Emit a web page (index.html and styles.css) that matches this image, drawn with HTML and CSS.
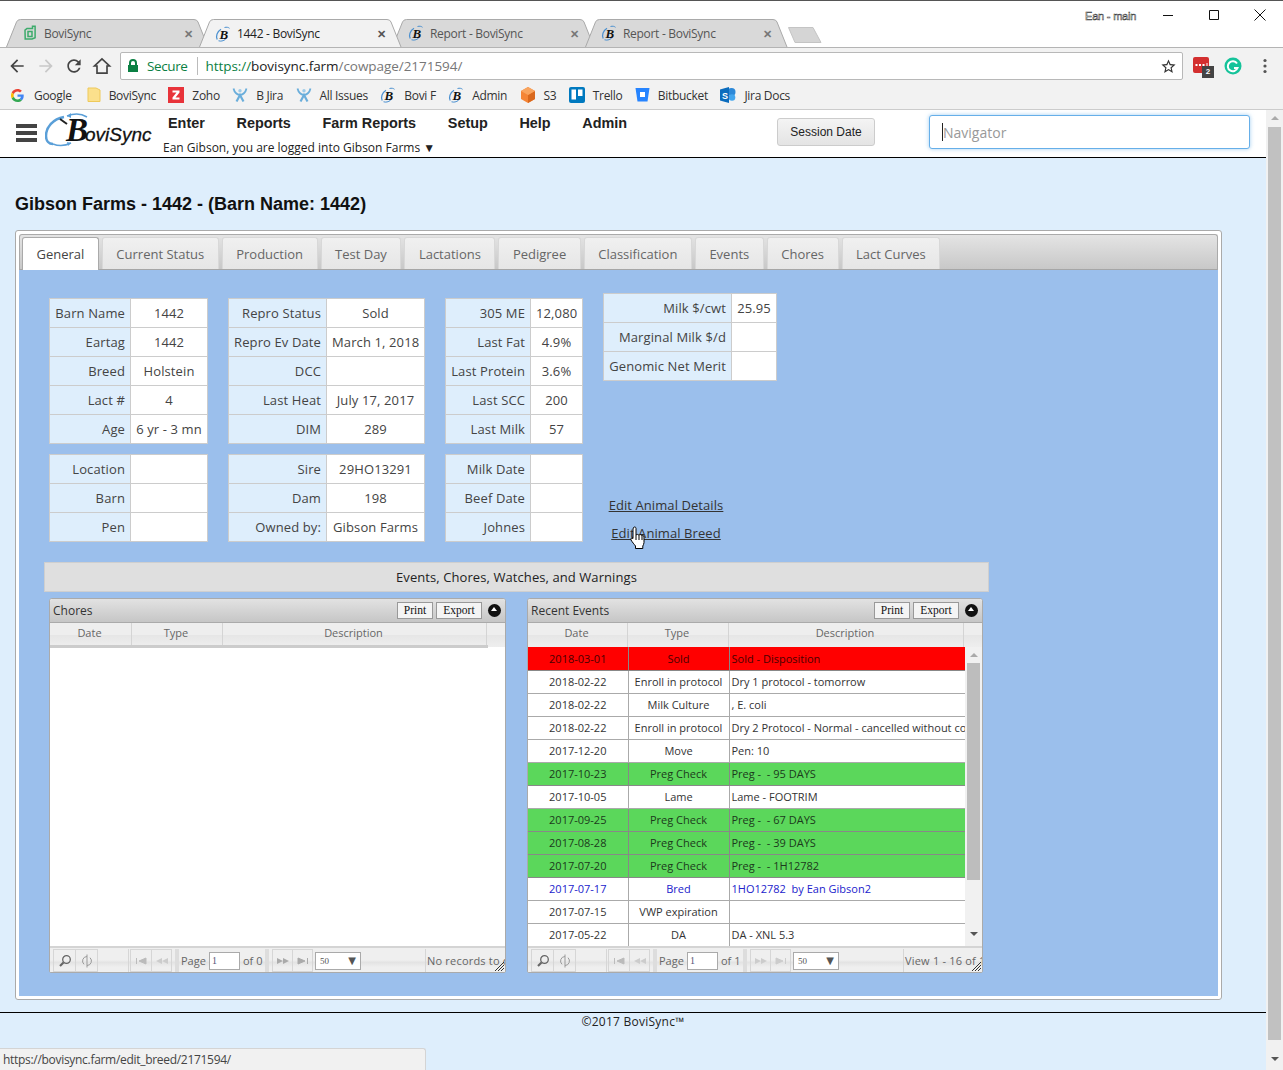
FILE: index.html
```html
<!DOCTYPE html>
<html lang="en">
<head>
<meta charset="utf-8">
<title>1442 - BoviSync</title>
<link rel="stylesheet" href="styles.css">
</head>
<body>
<svg class="defs" aria-hidden="true" width="0" height="0">
  <symbol id="i-bovi" viewBox="0 0 16 16">
    <path d="M2.2 13.5C.6 10.5 2 5.5 6 3.2" fill="none" stroke="#4a90d0" stroke-width="1.3"/>
    <path d="M3.5 14.8c3 1 6.5-.4 8-2.6M9.5 1.5c2-.6 4-.2 5 .8" fill="none" stroke="#4a90d0" stroke-width="1"/>
    <text x="4.5" y="12.5" class="fav-b">B</text>
  </symbol>
  <symbol id="i-green" viewBox="0 0 16 16">
    <path d="M5 3.5h5.500V1.200h2.600v11.600l-3 1.200H3.200L3 5.200z" fill="none" stroke="#3cab6b" stroke-width="1.5"/>
    <path d="M6 6.500h4v5H6z" fill="none" stroke="#3cab6b" stroke-width="1.5"/>
  </symbol>
  <symbol id="i-jira" viewBox="0 0 16 16">
    <path d="M1.500 1.500c1 4 3 6 6.500 6.500 3.500-.5 5.500-2.500 6.500-6.500" fill="none" stroke="#6aaedb" stroke-width="1.8"/>
    <path d="M4.500 14.500 8 8l3.500 6.500" fill="none" stroke="#6aaedb" stroke-width="2.2"/>
    <circle cx="8" cy="3.800" r="1.700" fill="#9ccbe8"/>
  </symbol>
</svg>

<header class="browser">
  <div class="tabstrip">
    <div class="tab">
      <svg class="tab-shape" width="205" height="28" viewBox="0 0 205 28"><path d="M.5 28 10.500 3Q11.500.5 14.500.5H188Q191 .5 192 3L202 28"/></svg>
      <svg class="tab-icon" width="16" height="16"><use href="#i-green"/></svg>
      <span class="tab-title">BoviSync</span><span class="tab-x">✕</span>
    </div>
    <div class="tab tab-active">
      <svg class="tab-shape" width="205" height="28" viewBox="0 0 205 28"><path d="M.5 28 10.500 3Q11.500.5 14.500.5H188Q191 .5 192 3L202 28"/></svg>
      <svg class="tab-icon" width="16" height="16"><use href="#i-bovi"/></svg>
      <span class="tab-title">1442 - BoviSync</span><span class="tab-x">✕</span>
    </div>
    <div class="tab">
      <svg class="tab-shape" width="205" height="28" viewBox="0 0 205 28"><path d="M.5 28 10.500 3Q11.500.5 14.500.5H188Q191 .5 192 3L202 28"/></svg>
      <svg class="tab-icon" width="16" height="16"><use href="#i-bovi"/></svg>
      <span class="tab-title">Report - BoviSync</span><span class="tab-x">✕</span>
    </div>
    <div class="tab">
      <svg class="tab-shape" width="205" height="28" viewBox="0 0 205 28"><path d="M.5 28 10.500 3Q11.500.5 14.500.5H188Q191 .5 192 3L202 28"/></svg>
      <svg class="tab-icon" width="16" height="16"><use href="#i-bovi"/></svg>
      <span class="tab-title">Report - BoviSync</span><span class="tab-x">✕</span>
    </div>
    <svg class="new-tab" width="36" height="18" viewBox="0 0 36 18"><path d="M1.500 1.500H26l8 15H8z" fill="#d5d5d5" stroke="#c4c4c4"/></svg>
    <span class="profile">Ean - main</span>
    <div class="winctl">
      <svg width="14" height="14" viewBox="0 0 14 14"><path d="M2 7.500h10" stroke="#111" fill="none"/></svg>
      <svg width="14" height="14" viewBox="0 0 14 14"><path d="M2.500 2.500h9v9h-9z" stroke="#111" fill="none"/></svg>
      <svg width="14" height="14" viewBox="0 0 14 14"><path d="M1.500 1.500l11 11m0-11-11 11" stroke="#111" fill="none"/></svg>
    </div>
  </div>

  <div class="toolbar">
    <svg class="nav-ic nav-back" width="20" height="20" viewBox="0 0 24 24"><path fill="#444" d="M20 11H7.830l5.590-5.590L12 4l-8 8 8 8 1.410-1.410L7.830 13H20v-2z"/></svg>
    <svg class="nav-ic" width="20" height="20" viewBox="0 0 24 24"><path fill="#c8c8c8" d="M4 11h12.170l-5.590-5.590L12 4l8 8-8 8-1.410-1.410L16.170 13H4v-2z"/></svg>
    <svg class="nav-ic" width="20" height="20" viewBox="0 0 24 24"><path fill="#444" d="M17.650 6.350C16.200 4.900 14.210 4 12 4c-4.420 0-7.990 3.580-7.990 8s3.570 8 7.990 8c3.730 0 6.840-2.550 7.730-6h-2.080c-.82 2.330-3.040 4-5.650 4-3.310 0-6-2.690-6-6s2.690-6 6-6c1.660 0 3.140.69 4.220 1.780L13 11h7V4l-2.350 2.350z"/></svg>
    <svg class="nav-ic" width="20" height="20" viewBox="0 0 24 24"><path fill="none" stroke="#444" stroke-width="2" d="M12 3.500 3 12h3v8.500h12V12h3z"/></svg>
    <div class="omnibox">
      <svg class="lock" width="12" height="14" viewBox="0 0 12 14"><path fill="#0b8043" d="M2 6V4a4 4 0 0 1 8 0v2h1v7H1V6zm2 0h4V4a2 2 0 0 0-4 0z"/></svg>
      <span class="secure">Secure</span>
      <span class="omni-sep"></span>
      <span class="url"><span class="url-scheme">https://</span><span class="url-host">bovisync.farm</span>/cowpage/2171594/</span>
      <svg class="star" width="17" height="17" viewBox="0 0 24 24"><path fill="#333" d="M22 9.240l-7.190-.62L12 2 9.190 8.630 2 9.240l5.460 4.730L5.820 21 12 17.270 18.180 21l-1.630-7.030L22 9.240zM12 15.400l-3.760 2.270 1-4.280-3.320-2.880 4.380-.38L12 6.100l1.710 4.040 4.380.38-3.320 2.880 1 4.280L12 15.400z"/></svg>
    </div>
    <div class="ext ext-red">
      <svg width="17" height="17" viewBox="0 0 17 17"><rect width="16" height="16" y="0" rx="2" fill="#d32f2f"/><path d="M2.500 8h2m1.500 0h2m1.500 0h2" stroke="#fff" stroke-width="2"/><path d="M14 6v4" stroke="#fff"/></svg>
      <span class="ext-badge">2</span>
    </div>
    <svg class="grammarly" width="18" height="18" viewBox="0 0 18 18"><circle cx="9" cy="9" r="8.500" fill="#15c39a"/><path d="M13 6.500A5 5 0 1 0 13.500 11H10" fill="none" stroke="#fff" stroke-width="2"/></svg>
    <svg class="menu-dots" width="4" height="16" viewBox="0 0 4 16"><circle cx="2" cy="2.500" r="1.600" fill="#555"/><circle cx="2" cy="8" r="1.600" fill="#555"/><circle cx="2" cy="13.500" r="1.600" fill="#555"/></svg>
  </div>

  <nav class="bookmarks">
    <a class="bm bm-first"><svg width="13" height="13" viewBox="0 0 48 48"><path fill="#EA4335" d="M24 9.500c3.540 0 6.710 1.220 9.210 3.600l6.850-6.850C35.900 2.380 30.470 0 24 0 14.620 0 6.510 5.380 2.560 13.220l7.980 6.190C12.430 13.720 17.740 9.500 24 9.500z"/><path fill="#4285F4" d="M46.980 24.550c0-1.570-.15-3.090-.38-4.550H24v9.020h12.940c-.58 2.960-2.260 5.480-4.780 7.180l7.730 6c4.510-4.180 7.090-10.360 7.090-17.650z"/><path fill="#FBBC05" d="M10.530 28.590c-.48-1.450-.76-2.990-.76-4.590s.27-3.140.76-4.590l-7.980-6.190C.92 16.460 0 20.120 0 24c0 3.880.92 7.540 2.560 10.780l7.970-6.190z"/><path fill="#34A853" d="M24 48c6.480 0 11.930-2.130 16.060-5.810l-7.730-6c-2.150 1.450-4.920 2.300-8.330 2.300-6.260 0-11.570-4.220-13.470-9.910l-7.980 6.190C6.510 42.620 14.620 48 24 48z"/></svg><span class="bm-google">Google</span></a>
    <a class="bm"><svg width="14" height="16" viewBox="0 0 14 16"><path d="M1 1h8l4 2v11.500H1z" fill="#fbe08c" stroke="#eec95a"/></svg><span>BoviSync</span></a>
    <a class="bm"><svg width="16" height="16" viewBox="0 0 16 16"><rect width="16" height="16" fill="#e8333a"/><path d="M4.500 3.500h7v2l-4 5h4v2h-7v-2l4-5h-4z" fill="#fff"/></svg><span>Zoho</span></a>
    <a class="bm"><svg width="16" height="16"><use href="#i-jira"/></svg><span>B Jira</span></a>
    <a class="bm"><svg width="16" height="16"><use href="#i-jira"/></svg><span>All Issues</span></a>
    <a class="bm"><svg width="16" height="16"><use href="#i-bovi"/></svg><span>Bovi F</span></a>
    <a class="bm"><svg width="16" height="16"><use href="#i-bovi"/></svg><span>Admin</span></a>
    <a class="bm"><svg width="16" height="16" viewBox="0 0 16 16"><path d="M8 0l7 4v8l-7 4-7-4V4z" fill="#f58536"/><path d="M8 8l7-4v8l-7 4z" fill="#d9681d"/><path d="M8 0l7 4-7 4-7-4z" fill="#f9a45e"/></svg><span>S3</span></a>
    <a class="bm"><svg width="16" height="16" viewBox="0 0 16 16"><rect width="16" height="16" rx="2" fill="#0079bf"/><rect x="2.500" y="2.500" width="4.500" height="10" fill="#fff"/><rect x="9" y="2.500" width="4.500" height="6.500" fill="#fff"/></svg><span>Trello</span></a>
    <a class="bm"><svg width="15" height="16" viewBox="0 0 15 16"><path d="M.5 1h14l-2 13.500h-10z" fill="#2684ff"/><rect x="5" y="5" width="5" height="5" fill="#fff"/></svg><span>Bitbucket</span></a>
    <a class="bm"><svg width="16" height="16" viewBox="0 0 16 16"><circle cx="11.500" cy="5" r="4" fill="#2b88d8"/><circle cx="12" cy="10.500" r="3.300" fill="#41a5ee"/><path d="M0 2.500 9 0v16L0 13.500z" fill="#0b6cbd"/><text x="2" y="11.500" class="sp-s">S</text></svg><span>Jira Docs</span></a>
  </nav>
</header>

<div class="viewport">
  <main class="page">
    <div class="topbar">
      <div class="burger"><i></i><i></i><i></i></div>
      <div class="logo">
        <svg class="logo-swirl" width="62" height="38" viewBox="0 0 62 38"><path d="M19 5C8 7 1 15 1 24c0 5 3 8 7 8" fill="none" stroke="#5a9fd8" stroke-width="2.500"/><path d="M8 32c5 2 12 2 18-1" fill="none" stroke="#5a9fd8" stroke-width="1.500"/><path d="M26 31l-4-1 1 4z" fill="#5a9fd8"/><path d="M22 4c8-3 15-2 20 1" fill="none" stroke="#5a9fd8" stroke-width="1.500"/><path d="M22 4l4-3v5z" fill="#5a9fd8"/><path d="M15 7l7 5" stroke="#222" stroke-width="2"/></svg>
        <span class="logo-b">B</span><span class="logo-rest">oviSync</span>
      </div>
      <div class="mainnav">
        <ul class="menu">
          <li>Enter</li><li>Reports</li><li>Farm Reports</li><li>Setup</li><li>Help</li><li>Admin</li>
        </ul>
        <div class="loggedin">Ean Gibson, you are logged into Gibson Farms ▼</div>
      </div>
      <button class="session">Session Date</button>
      <div class="navigator"><span class="caret"></span><span class="ph">Navigator</span></div>
    </div>

    <h1 class="title">Gibson Farms - 1442 - (Barn Name: 1442)</h1>

    <section class="widget">
      <ul class="wtabs">
        <li class="wtab wtab-on">General</li>
        <li class="wtab">Current Status</li>
        <li class="wtab">Production</li>
        <li class="wtab">Test Day</li>
        <li class="wtab">Lactations</li>
        <li class="wtab">Pedigree</li>
        <li class="wtab">Classification</li>
        <li class="wtab">Events</li>
        <li class="wtab">Chores</li>
        <li class="wtab">Lact Curves</li>
      </ul>
      <div class="panel">
        <div class="info">
          <table class="kv c1"><tr><th>Barn Name</th><td>1442</td></tr><tr><th>Eartag</th><td>1442</td></tr><tr><th>Breed</th><td>Holstein</td></tr><tr><th>Lact #</th><td>4</td></tr><tr><th>Age</th><td>6 yr - 3 mn</td></tr></table>
          <table class="kv c2"><tr><th>Repro Status</th><td>Sold</td></tr><tr><th>Repro Ev Date</th><td>March 1, 2018</td></tr><tr><th>DCC</th><td></td></tr><tr><th>Last Heat</th><td>July 17, 2017</td></tr><tr><th>DIM</th><td>289</td></tr></table>
          <table class="kv c3"><tr><th>305 ME</th><td>12,080</td></tr><tr><th>Last Fat</th><td>4.9%</td></tr><tr><th>Last Protein</th><td>3.6%</td></tr><tr><th>Last SCC</th><td>200</td></tr><tr><th>Last Milk</th><td>57</td></tr></table>
          <div class="col4">
            <table class="kv c4"><tr><th>Milk $/cwt</th><td>25.95</td></tr><tr><th>Marginal Milk $/d</th><td></td></tr><tr><th>Genomic Net Merit</th><td></td></tr></table>
            <div class="links">
              <a class="lnk">Edit Animal Details</a>
              <a class="lnk lnk-breed">Edit Animal Breed
                <svg class="hand" width="16" height="24" viewBox="0 0 16 24"><path d="M3.500 1.500c1.200-1 2.500-.5 2.500 1V9c1-.8 2.200-.8 2.800 0 1-.7 2.200-.5 2.700.4 1-.4 2.500 0 2.500 1.600v5.500c0 1.500-.8 2.500-1.200 3.500v2.500H5.500V20C4 18 2.500 16.500 1 14c-.8-1.500.5-2.500 2-1.500V3z" fill="#fff" stroke="#000"/><path d="M6 9v5m3-5v5m3-4.500V14" stroke="#000" fill="none"/></svg>
              </a>
            </div>
          </div>
          <table class="kv c1"><tr><th>Location</th><td></td></tr><tr><th>Barn</th><td></td></tr><tr><th>Pen</th><td></td></tr></table>
          <table class="kv c2"><tr><th>Sire</th><td>29HO13291</td></tr><tr><th>Dam</th><td>198</td></tr><tr><th>Owned by:</th><td>Gibson Farms</td></tr></table>
          <table class="kv c3"><tr><th>Milk Date</th><td></td></tr><tr><th>Beef Date</th><td></td></tr><tr><th>Johnes</th><td></td></tr></table>
        </div>

        <div class="eventsbar">Events, Chores, Watches, and Warnings</div>

        <div class="grids">
          <article class="grid g-chores">
            <div class="gtitle"><span class="gname">Chores</span><button class="gbtn">Print</button><button class="gbtn">Export</button><span class="gcollapse"></span></div>
            <div class="ghead"><span class="gh g1">Date</span><span class="gh g2">Type</span><span class="gh g3">Description</span><span class="gh g4"></span></div>
            <div class="gbody gbody-empty"><div class="ghead-rule"></div></div>
            <div class="pager">
              <span class="pbtn"><svg width="14" height="14" viewBox="0 0 14 14"><circle cx="8.500" cy="5.500" r="3.800" fill="none" stroke="#666" stroke-width="1.300"/><path d="M5.500 8.500 2 12" stroke="#666" stroke-width="2.200"/></svg></span>
              <span class="pbtn"><svg width="14" height="14" viewBox="0 0 14 14"><path d="M7 2.500a4.500 4.500 0 0 0-3 7.800M7 11.500a4.500 4.500 0 0 0 3-7.800M7 .5v13" fill="none" stroke="#999"/></svg></span>
              <span class="pgap"></span>
              <span class="pbtn pbtn-first"><svg width="12" height="8" viewBox="0 0 12 8"><path d="M1.500 1v6M11 1v6L4 4z" fill="#bbb" stroke="#bbb"/></svg></span>
              <span class="pbtn pbtn-n"><svg width="14" height="8" viewBox="0 0 14 8"><path d="M7 1v6L1 4zM13 1v6L7 4z" fill="#ccc"/></svg></span>
              <span class="pdiv"></span>
              <span class="ppage">Page</span><span class="pinput">1</span><span class="pof">of 0</span>
              <span class="pdiv"></span>
              <span class="pbtn pbtn-n"><svg width="14" height="8" viewBox="0 0 14 8"><path d="M1 1v6l6-3zM7 1v6l6-3z" fill="#aaa"/></svg></span>
              <span class="pbtn pbtn-n"><svg width="12" height="8" viewBox="0 0 12 8"><path d="M1 1v6l7-3zM10.500 1v6" fill="#aaa" stroke="#aaa"/></svg></span>
              <span class="pselect"><span class="psel-v">50</span><span class="psel-a">▼</span></span>
              <span class="pinfo">No records to display</span>
              <svg class="grip" width="9" height="9" viewBox="0 0 9 9"><path d="M0 9 9 0M3 9l6-6M6 9l3-3" stroke="#333"/></svg>
            </div>
          </article>

          <article class="grid g-events">
            <div class="gtitle"><span class="gname">Recent Events</span><button class="gbtn">Print</button><button class="gbtn">Export</button><span class="gcollapse"></span></div>
            <div class="ghead"><span class="gh e1">Date</span><span class="gh e2">Type</span><span class="gh e3">Description</span><span class="gh g4"></span></div>
            <div class="gbody">
              <div class="rows">
                <table class="evt">
                  <tr class="r-red"><td>2018-03-01</td><td>Sold</td><td class="d">Sold - Disposition</td></tr>
                  <tr><td>2018-02-22</td><td>Enroll in protocol</td><td class="d">Dry 1 protocol - tomorrow</td></tr>
                  <tr><td>2018-02-22</td><td>Milk Culture</td><td class="d">, E. coli</td></tr>
                  <tr><td>2018-02-22</td><td>Enroll in protocol</td><td class="d">Dry 2 Protocol - Normal - cancelled without consent</td></tr>
                  <tr><td>2017-12-20</td><td>Move</td><td class="d">Pen: 10</td></tr>
                  <tr class="r-green"><td>2017-10-23</td><td>Preg Check</td><td class="d">Preg -&nbsp; - 95 DAYS</td></tr>
                  <tr><td>2017-10-05</td><td>Lame</td><td class="d">Lame - FOOTRIM</td></tr>
                  <tr class="r-green"><td>2017-09-25</td><td>Preg Check</td><td class="d">Preg -&nbsp; - 67 DAYS</td></tr>
                  <tr class="r-green"><td>2017-08-28</td><td>Preg Check</td><td class="d">Preg -&nbsp; - 39 DAYS</td></tr>
                  <tr class="r-green"><td>2017-07-20</td><td>Preg Check</td><td class="d">Preg -&nbsp; - 1H12782</td></tr>
                  <tr class="r-blue"><td>2017-07-17</td><td>Bred</td><td class="d">1HO12782&nbsp; by Ean Gibson2</td></tr>
                  <tr><td>2017-07-15</td><td>VWP expiration</td><td class="d"></td></tr>
                  <tr><td>2017-05-22</td><td>DA</td><td class="d">DA - XNL 5.3</td></tr>
                </table>
              </div>
              <div class="vbar"><span class="tri tri-up"></span><span class="vthumb"></span><span class="tri tri-dn"></span></div>
            </div>
            <div class="pager">
              <span class="pbtn"><svg width="14" height="14" viewBox="0 0 14 14"><circle cx="8.500" cy="5.500" r="3.800" fill="none" stroke="#666" stroke-width="1.300"/><path d="M5.500 8.500 2 12" stroke="#666" stroke-width="2.200"/></svg></span>
              <span class="pbtn"><svg width="14" height="14" viewBox="0 0 14 14"><path d="M7 2.500a4.500 4.500 0 0 0-3 7.800M7 11.500a4.500 4.500 0 0 0 3-7.800M7 .5v13" fill="none" stroke="#999"/></svg></span>
              <span class="pgap"></span>
              <span class="pbtn pbtn-first"><svg width="12" height="8" viewBox="0 0 12 8"><path d="M1.500 1v6M11 1v6L4 4z" fill="#bbb" stroke="#bbb"/></svg></span>
              <span class="pbtn pbtn-n"><svg width="14" height="8" viewBox="0 0 14 8"><path d="M7 1v6L1 4zM13 1v6L7 4z" fill="#ccc"/></svg></span>
              <span class="pdiv"></span>
              <span class="ppage">Page</span><span class="pinput">1</span><span class="pof">of 1</span>
              <span class="pdiv"></span>
              <span class="pbtn pbtn-n"><svg width="14" height="8" viewBox="0 0 14 8"><path d="M1 1v6l6-3zM7 1v6l6-3z" fill="#ccc"/></svg></span>
              <span class="pbtn pbtn-n"><svg width="12" height="8" viewBox="0 0 12 8"><path d="M1 1v6l7-3zM10.500 1v6" fill="#ccc" stroke="#ccc"/></svg></span>
              <span class="pselect"><span class="psel-v">50</span><span class="psel-a">▼</span></span>
              <span class="pinfo">View 1 - 16 of 16</span>
              <svg class="grip" width="9" height="9" viewBox="0 0 9 9"><path d="M0 9 9 0M3 9l6-6M6 9l3-3" stroke="#333"/></svg>
            </div>
          </article>
        </div>
      </div>
    </section>

    <footer class="foot">©2017 BoviSync™</footer>
  </main>
  <div class="pagebar"><span class="tri tri-up"></span><span class="pagethumb"></span><span class="tri tri-dn"></span></div>
  <div class="statusbub">https://bovisync.farm/edit_breed/2171594/</div>
</div>
</body>
</html>
```
FILE: styles.css
```css
* { box-sizing: border-box; }
html, body { margin: 0; padding: 0; }
body { width: 1283px; height: 1070px; overflow: hidden; display: flex; flex-direction: column; font-family: "Open Sans", "Liberation Sans", sans-serif; color: #333; background: #fff; }
.defs { position: absolute; }
.fav-b { font: italic bold 13px "Liberation Serif", serif; fill: #111; }
.sp-s { font: bold 9px "Liberation Sans", sans-serif; fill: #fff; }
ul { list-style: none; margin: 0; padding: 0; }

/* browser chrome */
.browser { flex: none; height: 110px; border-top: 1px solid #555; border-bottom: 1px solid #ccc; background: #f2f2f2; }
.tabstrip { height: 47px; display: flex; padding-left: 6px; background: #fff; border-bottom: 1px solid #b4b4b4; }
.tab { position: relative; width: 205px; height: 28px; margin: 18px -12px 0 0; display: flex; align-items: center; padding: 0 17px 0 16px; font-size: 12px; color: #555; flex: none; }
.tab-active { z-index: 2; color: #222; height: 29px; }
.tab-shape { position: absolute; left: 0; top: 0; }
.tab-shape path { fill: #d9d9d9; stroke: #a9a9a9; }
.tab-active .tab-shape path { fill: #f2f2f2; }
.tab-icon { position: relative; flex: none; margin-right: 6px; }
.tab-title { position: relative; flex: 1; letter-spacing: -.3px; }
.tab-x { position: relative; font-size: 11px; font-weight: 700; color: #777; margin-right: 1px; }
.tab-active .tab-x { color: #555; }
.new-tab { flex: none; margin: 25px 0 0 9px; }
.profile { margin: 9px 0 0 262px; font: 11px "Liberation Sans", sans-serif; letter-spacing: -.2px; width: 54px; color: #fff; -webkit-text-stroke: .5px #333; white-space: nowrap; }
.winctl { display: flex; gap: 32px; margin: 7px 0 0 22px; height: 16px; }
.toolbar { height: 33px; display: flex; align-items: center; padding: 3px 0 0 7px; background: #f2f2f2; }
.nav-ic { flex: none; margin-right: 8px; }
.nav-back { margin-right: 9px; }
.omnibox { width: 1063px; height: 28px; margin-left: 0; background: #fff; border: 1px solid #b8b8b8; border-radius: 2px; display: flex; align-items: center; padding: 0 5px 0 6px; font-size: 14px; }
.lock { flex: none; margin-right: 8px; }
.secure { color: #0b8043; font-size: 13.5px; letter-spacing: -.4px; }
.omni-sep { width: 1px; height: 18px; background: #bbb; margin: 0 7px 0 10px; }
.url { flex: 1; color: #777; font-size: 13.5px; letter-spacing: -.05px; }
.url-scheme { color: #0b8043; }
.url-host { color: #222; }
.ext { position: relative; flex: none; }
.ext-red { margin-left: 10px; width: 20px; height: 20px; padding-top: 1px; }
.ext-red svg { display: block; }
.ext-badge { position: absolute; left: 9px; top: 10px; width: 12px; height: 12px; background: #444; color: #fff; font: bold 8px/12px "Liberation Sans", sans-serif; text-align: center; }
.grammarly { flex: none; margin-left: 11px; }
.menu-dots { flex: none; margin-left: 21px; }
.bookmarks { height: 28px; display: flex; align-items: center; padding-left: 11px; background: #f2f2f2; font-size: 12px; color: #333; letter-spacing: -.3px; }
.bm { display: flex; align-items: center; gap: 8px; margin-right: 12.4px; }
.bm svg { flex: none; }
.bm-first { margin-right: 15px; }
.bm-google { margin-left: 2px; }

/* page */
.viewport { position: relative; flex: 1; display: flex; min-height: 0; }
.page { flex: 1; min-width: 0; background: #deeefc; }
.topbar { height: 48px; background: #fff; border-bottom: 1px solid #000; display: flex; align-items: flex-start; }
.burger { width: 21px; margin: 14px 8px 0 16px; display: flex; flex-direction: column; gap: 3px; }
.burger i { display: block; height: 4px; background: #444; }
.logo { position: relative; width: 110px; height: 36px; margin-top: 2px; padding-left: 21px; display: flex; align-items: baseline; color: #111; }
.logo-swirl { position: absolute; left: 0; top: 0; }
.logo-b { position: relative; font: italic bold 33px/36px "Liberation Serif", serif; }
.logo-rest { position: relative; font: italic 19px/36px "Liberation Sans", sans-serif; margin-left: -3px; -webkit-text-stroke: .3px #111; }
.mainnav { width: 614px; margin-left: 8px; padding-top: 3px; }
.menu { display: flex; gap: 31.7px; padding-left: 5px; font: bold 14.4px/20px "Liberation Sans", sans-serif; color: #222; }
.loggedin { margin-top: 7px; font-size: 12px; line-height: 16px; color: #222; }
.session { width: 98px; height: 28px; margin-top: 8px; border: 1px solid #ccc; border-radius: 3px; background: linear-gradient(#f4f4f4, #e4e4e4); font: 12px "Liberation Sans", sans-serif; color: #222; padding: 0; }
.navigator { width: 321px; height: 34px; margin: 5px 0 0 54px; border: 1px solid #66afe9; border-radius: 3px; background: #fff; box-shadow: 0 0 4px rgba(102,175,233,.6); display: flex; align-items: center; padding-left: 12px; font-size: 14px; color: #999; }
.caret { width: 1px; height: 18px; background: #222; }
.title { margin: 0; padding: 35px 15px 15px; font: bold 18px/22px "Liberation Sans", sans-serif; color: #111; }

.widget { width: 1207px; height: 770px; margin-left: 15px; background: #fff; border: 1px solid #aaa; border-radius: 3px; padding: 3px; display: flex; flex-direction: column; }
.wtabs { height: 36px; flex: none; display: flex; gap: 3px; align-items: flex-end; padding: 0 0 0 2px; border: 1px solid #aaa; border-bottom-color: #a6a6a6; border-radius: 3px 3px 0 0; background: linear-gradient(#e4e4e4, #c8c8c8); }
.wtab { height: 32px; padding: 0 13.5px; font-size: 13px; line-height: 33px; color: #666; background: linear-gradient(#f0f0f0, #e6e6e6); border: 1px solid #d8d8d8; border-bottom: 0; border-radius: 3px 3px 0 0; }
.wtab-on { height: 33px; margin-bottom: -1px; background: #fff; color: #444; border-color: #aaa; }
.panel { flex: 1; background: #9bbfec; padding: 23px 0 0 25px; }

.info { display: grid; grid-template-columns: 159px 197px 138px 174px; column-gap: 20px; row-gap: 10px; padding-left: 5px; grid-template-rows: 151px 88px; }
.kv { border-collapse: collapse; table-layout: fixed; font-size: 13px; letter-spacing: .12px; background: #fff; align-self: end; border: 1px solid #dcdcdc; }
.kv th, .kv td { height: 29px; border: 1px solid #ccc; padding: 0 5px; font-weight: 400; color: #444; white-space: nowrap; }
.kv th { text-align: right; background: #deeefc; }
.kv td { text-align: center; background: #fff; }
.c1 { width: 159px; } .c1 th { width: 81px; }
.c2 { width: 197px; } .c2 th { width: 98px; }
.c3 { width: 138px; } .c3 th { width: 85px; }
.c4 { width: 174px; } .c4 th { width: 128px; }
.col4 { grid-column: 4; grid-row: 1 / span 2; display: flex; flex-direction: column; align-items: flex-start; }
.links { width: 126px; margin: 115px 0 0 0; display: flex; flex-direction: column; align-items: center; gap: 10px; }
.lnk { position: relative; font-size: 13px; letter-spacing: .08px; line-height: 18px; color: #333; text-decoration: underline; white-space: nowrap; }
.hand { position: absolute; left: 19px; top: 2px; }

.eventsbar { width: 945px; height: 30px; margin-top: 20px; background: #dfdfdf; border: 1px solid #cfcfcf; font-size: 13px; letter-spacing: .08px; line-height: 28px; font-weight: 500; text-align: center; color: #222; }
.grids { display: flex; gap: 21px; margin: 6px 0 0 5px; }
.grid { position: relative; width: 457px; height: 375px; display: flex; flex-direction: column; background: #fff; border: 1px solid #aaa; border-radius: 3px 3px 2px 2px; overflow: hidden; }
.g-events { width: 456px; }
.gtitle { flex: none; height: 24px; display: flex; align-items: center; padding-left: 3px; gap: 3px; font-size: 12px; color: #333; background: linear-gradient(#e2e2e2, #c6c6c6); border-bottom: 1px solid #aaa; }
.gname { flex: 1; }
.gbtn { width: 36px; height: 17px; padding: 0; border: 1px solid #999; background: #f4f4f4; font: 11.5px/15px "Liberation Serif", serif; color: #111; }
.gbtn + .gbtn { width: 46px; margin-right: 0; }
.gcollapse { position: relative; width: 13px; height: 13px; margin: 0 4px 0 3px; border-radius: 50%; background: #111; }
.gcollapse::after { content: ""; position: absolute; left: 3px; top: 3px; border: 3.5px solid transparent; border-top: 0; border-bottom: 4px solid #fff; }
.ghead { flex: none; height: 24px; display: flex; background: linear-gradient(#eee 50%, #e6e6e6 50%, #eee); font-size: 11px; color: #666; }
.gh { border-right: 1px solid #d4d4d4; text-align: center; line-height: 20px; flex: none; padding-right: 2px; }
.g1 { width: 82px; } .g2 { width: 91px; } .g3 { width: 264px; } .g4 { flex: 1; border-right: 0; }
.e1 { width: 100px; } .e2 { width: 101px; } .e3 { width: 235px; }
.gbody { flex: 1; display: flex; min-height: 0; background: #fff; }
.gbody-empty { display: block; }
.ghead-rule { width: 438px; height: 3px; margin-top: -2px; background: #ccc; position: relative; }
.rows { flex: 1; min-width: 0; overflow: hidden; }
.evt { width: 437px; table-layout: fixed; border-collapse: collapse; font-size: 11px; }
.evt td { height: 23px; padding: 0; border: 1px solid #aaa; border-top: 0; text-align: center; color: #333; white-space: nowrap; overflow: hidden; }
.evt tr:last-child td { border-bottom: 0; }
.evt td:first-child { width: 100px; border-left: 0; }
.evt td:nth-child(2) { width: 101px; }
.evt td.d { text-align: left; padding-left: 2px; border-right: 0; }
.r-red td { background: #f00; border-color: #888; }
.evt .r-red td { color: #4a0000; }
.r-green td { background: #5bd75b; border-color: #888; }
.evt .r-green td { color: #1c3a1c; }
.evt .r-blue td { color: #2222cc; }
.vbar { width: 17px; flex: none; background: #f1f1f1; display: flex; flex-direction: column; align-items: center; padding-top: 6px; }
.vthumb { width: 13px; height: 217px; margin-top: 6px; background: #bdbdbd; }
.tri { display: block; width: 0; height: 0; border-left: 4px solid transparent; border-right: 4px solid transparent; flex: none; }
.tri-up { border-bottom: 4px solid #aaa; }
.tri-dn { border-top: 4px solid #555; margin-top: 52px; }
.pager { position: relative; flex: none; height: 26px; display: flex; align-items: center; padding: 1px 0 0 3px; border-top: 2px solid #d4d4d4; background: linear-gradient(#efefef 50%, #e3e3e3 60%, #efefef 80%); font-size: 11px; color: #666; }
.pbtn { flex: none; width: 23px; height: 23px; border: 1px solid #d6d6d6; margin-right: -1px; display: flex; align-items: center; justify-content: center; }
.pbtn-n { width: 21px; }
.pbtn-first { width: 22px; }
.pgap { flex: none; width: 32px; height: 24px; margin-right: 1px; border-right: 1px solid #d6d6d6; }
.pdiv { flex: none; width: 4px; height: 23px; margin: 0 5px 0 4px; background: #ddd; }
.pof + .pdiv { margin: 0 3px; }
.ppage { flex: none; width: 28px; margin-left: -3px; }
.pinput { flex: none; width: 31px; height: 18px; background: #fff; border: 1px solid #aaa; font: 10px/16px "Liberation Serif", serif; padding-left: 2px; color: #557; }
.pof { flex: none; margin-left: 3px; width: 19px; white-space: nowrap; }
.pselect { flex: none; width: 46px; height: 18px; margin-left: 3px; background: #fff; border: 1px solid #aaa; display: flex; justify-content: space-between; padding: 0 4px; font: 9px/16px "Liberation Serif", serif; color: #555; }
.psel-a { font-size: 10px; color: #555; font-family: "DejaVu Sans", sans-serif; }
.pinfo { flex: none; width: 80px; height: 24px; margin-left: 64px; padding-left: 1px; line-height: 24px; letter-spacing: .2px; font-size: 11px; border-left: 1px solid #d6d6d6; white-space: nowrap; overflow: hidden; }
.grip { position: absolute; right: 1px; bottom: 1px; }

.foot { margin: 12px 0 0; border-top: 1px solid #000; font-size: 12px; letter-spacing: .25px; line-height: 16px; padding-top: 1px; text-align: center; color: #222; }
.pagebar { flex: none; width: 17px; background: #f1f1f1; display: flex; flex-direction: column; align-items: center; padding-top: 6px; }
.pagethumb { width: 13px; height: 913px; margin-top: 7px; background: #c1c1c1; }
.pagebar .tri-dn { margin-top: 17px; }
.statusbub { position: absolute; left: 0; bottom: 0; width: 426px; height: 22px; background: #f1f1f1; border: 1px solid #d4d4d4; border-width: 1px 1px 0 0; border-radius: 0 3px 0 0; font-size: 12px; line-height: 21px; padding-left: 3px; color: #444; letter-spacing: -.3px; }
```
